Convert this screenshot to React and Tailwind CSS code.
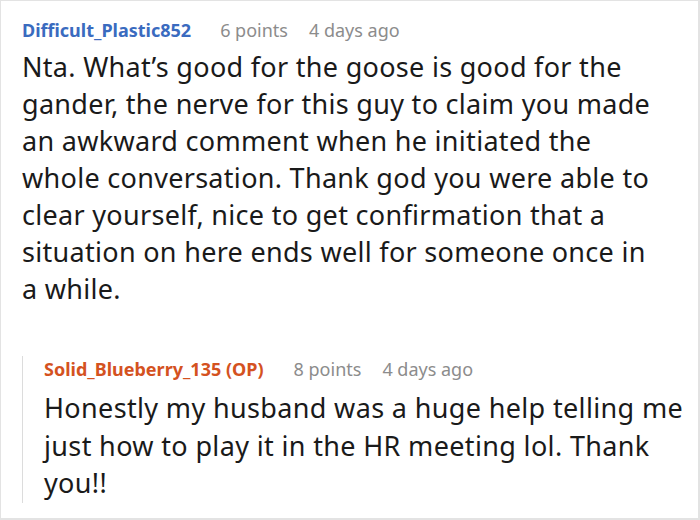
export default function App() {
  return (
    <div className="w-[700px] h-[520px] bg-white border border-[#e3e3e3] border-r-2 border-b-2 overflow-hidden" style={{ fontFamily: '"Noto Sans", sans-serif' }}>
      <div className="pt-[16px] pl-[21px] pr-[12px]">
        <div className="flex items-baseline text-[18px] leading-[26px]">
          <span className="font-bold text-[#3a6bbf]">Difficult_Plastic852</span>
          <span className="ml-[29px] text-[#8c8c8c]">6 points</span>
          <span className="ml-[21px] text-[#8c8c8c]">4 days ago</span>
        </div>
        <p className="mt-[5px] text-[27px] leading-[37px] tracking-[0.3px] text-[#1a1a1a]">
          Nta. What’s good for the goose is good for the<br />
          gander, the nerve for this guy to claim you made<br />
          an awkward comment when he initiated the<br />
          whole conversation. Thank god you were able to<br />
          clear yourself, nice to get confirmation that a<br />
          situation on here ends well for someone once in<br />
          a while.
        </p>
        <div className="mt-[62px] border-l border-[#dcdcdc] pl-[21px] pb-[1px]">
          <div className="-mt-[13px] flex items-baseline text-[18px] leading-[26px]">
            <span className="font-bold text-[#d4521f]">Solid_Blueberry_135 (OP)</span>
            <span className="ml-[30px] text-[#8c8c8c]">8 points</span>
            <span className="ml-[21px] text-[#8c8c8c]">4 days ago</span>
          </div>
          <p className="mt-[7px] text-[27px] leading-[37.5px] tracking-[0.35px] text-[#1a1a1a]">
            Honestly my husband was a huge help telling me<br />
            just how to play it in the HR meeting lol. Thank<br />
            you!!
          </p>
        </div>
      </div>
    </div>
  );
}
